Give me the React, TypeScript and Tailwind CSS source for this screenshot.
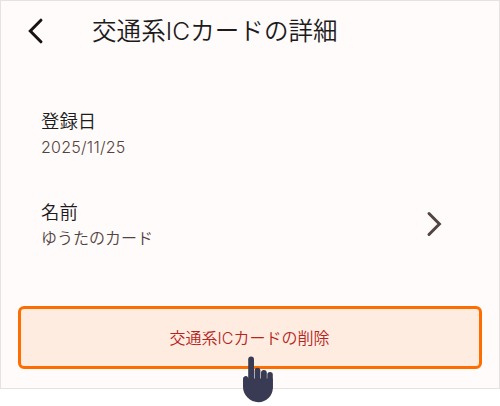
const font = "font-['Inter','Noto_Sans_CJK_JP',sans-serif]";

function BackIcon() {
  return (
    <svg width="16" height="26" viewBox="0 0 16 26" fill="none" stroke="#171314" strokeWidth="3" strokeLinecap="round">
      <path d="M13.9 2.2 3.3 13l10.6 10.8" />
    </svg>
  );
}

function ChevronIcon() {
  return (
    <svg width="16" height="26" viewBox="0 0 16 26" fill="none" stroke="#534341" strokeWidth="3" strokeLinecap="round">
      <path d="M3 2.5 13.4 13 3 23.5" />
    </svg>
  );
}

function HandIcon() {
  return (
    <svg width="32" height="47" viewBox="0 0 32 47" fill="#393a53">
      <rect x="6.2" y="0.6" width="5.8" height="30" rx="2.9" />
      <rect x="12.6" y="11.8" width="5.8" height="20" rx="2.9" />
      <rect x="19" y="14" width="5.8" height="20" rx="2.9" />
      <rect x="25.3" y="16" width="5.5" height="18" rx="2.7" />
      <path d="M1 23a2.7 2.7 0 0 1 5-1.6l.5 1h24.3V32c0 8-6.5 14.2-14.3 14.2C8 46.2 1 39 1 31z" />
    </svg>
  );
}

export default function App() {
  return (
    <div className={`relative h-[406px] w-[500px] bg-white ${font}`}>
      <main className="h-[389px] border border-[#e6e2e2] bg-[#fffbfa]">
        <header className="flex h-[60px] items-center pl-[26px]">
          <button type="button" aria-label="戻る">
            <BackIcon />
          </button>
          <h1 className="ml-[49px] text-[24.5px] font-[350] tracking-[0.08px] text-[#201a1a]">交通系ICカードの詳細</h1>
        </header>

        <section className="mt-[47px] pl-10">
          <h2 className="text-[18.4px] leading-[26px] font-[350] text-[#201a1a]">登録日</h2>
          <p className="text-[16px] leading-[26px] font-[350] tracking-[0.25px] text-[#534341]">2025/11/25</p>
        </section>

        <section className="mt-[39px] flex items-center justify-between pr-[57px] pl-10">
          <div>
            <h2 className="text-[18.4px] leading-[26px] font-[350] text-[#201a1a]">名前</h2>
            <p className="text-[16px] leading-[26px] font-[350] text-[#534341]">ゆうたのカード</p>
          </div>
          <div className="pb-0.5">
            <ChevronIcon />
          </div>
        </section>

        <button
          type="button"
          className="mt-[55px] ml-[17px] flex h-[63px] w-[464px] items-center justify-center rounded-[6px] border-3 border-[#ff6d00] bg-[#ffece1] pr-px text-[16px] font-[350] text-[#b3261e]"
        >
          交通系ICカードの削除
        </button>
      </main>

      <div className="absolute top-[356px] left-[242px]">
        <HandIcon />
      </div>
    </div>
  );
}
